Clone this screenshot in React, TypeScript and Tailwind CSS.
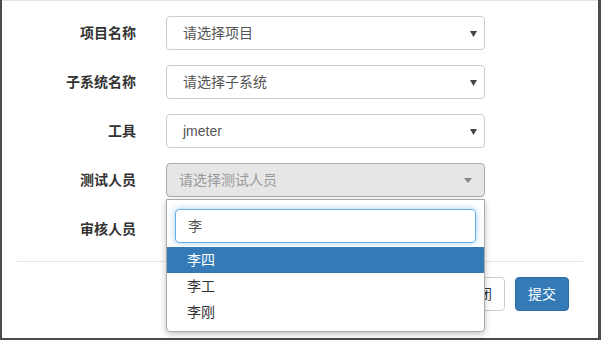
import React from "react";

const font = { fontFamily: '"Liberation Sans", "Noto Sans CJK SC", sans-serif' };

const Caret: React.FC = () => (
  <svg width="7" height="6" viewBox="0 0 7 6" className="absolute right-[7px] top-[14px]">
    <path d="M0 0 H7 L3.5 6 Z" fill="#444" />
  </svg>
);

const SelectBox: React.FC<{ value: string }> = ({ value }) => (
  <div className="relative h-[34px] w-[319px] rounded-[4px] border border-[#ccc] bg-white pl-[16px] text-[14px] leading-[32px] text-[#555]">
    {value}
    <Caret />
  </div>
);

const Row: React.FC<{ label: string; children: React.ReactNode }> = ({ label, children }) => (
  <div className="flex h-[34px] items-center">
    <div className="w-[134px] text-right text-[14px] font-bold text-[#333]">{label}</div>
    <div className="ml-[30px]">{children}</div>
  </div>
);

const options = ["李四", "李工", "李刚"];

export default function App() {
  return (
    <div className="h-[340px] w-[601px] bg-[#4b4b4b] pl-[2px] pr-[3px] pb-[2px]" style={font}>
      <div className="relative h-[338px] w-full border-t border-[#e5e5e5] bg-white">
        <div className="flex flex-col gap-[15px] pt-[15px]">
          <Row label="项目名称">
            <SelectBox value="请选择项目" />
          </Row>
          <Row label="子系统名称">
            <SelectBox value="请选择子系统" />
          </Row>
          <Row label="工具">
            <SelectBox value="jmeter" />
          </Row>
          <Row label="测试人员">
            <div className="relative h-[34px] w-[319px] rounded-[4px] border border-[#aaa] bg-[#e6e6e6] pl-[12px] text-[14px] leading-[32px] text-[#999]">
              请选择测试人员
              <span className="absolute right-[12px] top-[14px] h-0 w-0 border-x-[4px] border-t-[5px] border-x-transparent border-t-[#888]" />
            </div>
          </Row>
          <Row label="审核人员">
            <div className="h-[34px] w-[319px]" />
          </Row>
        </div>

        <div className="mx-[15px] mt-[15px] border-t border-[#e5e5e5]" />

        <div className="flex justify-end gap-[10px] pr-[29px] pt-[15px]">
          <button className="h-[34px] w-[54px] rounded-[4px] border border-[#ccc] bg-white text-[14px] text-[#333]">
            关闭
          </button>
          <button className="h-[34px] w-[54px] rounded-[4px] border border-[#2e6da4] bg-[#337ab7] text-[14px] text-white">
            提交
          </button>
        </div>

        {/* select2 dropdown */}
        <div className="absolute left-[164px] top-[198px] w-[319px] rounded-b-[4px] border border-[#aaa] bg-white pb-[6px] shadow-[0_2px_6px_rgba(0,0,0,0.25)]">
          <div className="px-[8px] pt-[9px] pb-[4px]">
            <div className="h-[34px] rounded-[4px] border border-[#66afe9] pl-[12px] text-[14px] leading-[32px] text-[#555] shadow-[0_0_6px_rgba(102,175,233,0.6)]">
              李
            </div>
          </div>
          {options.map((o, i) => (
            <div
              key={o}
              className={
                i === 0
                  ? "h-[26px] bg-[#337ab7] pl-[20px] text-[14px] leading-[26px] text-white"
                  : "h-[26px] pl-[20px] text-[14px] leading-[26px] text-[#333]"
              }
            >
              {o}
            </div>
          ))}
        </div>
      </div>
    </div>
  );
}
